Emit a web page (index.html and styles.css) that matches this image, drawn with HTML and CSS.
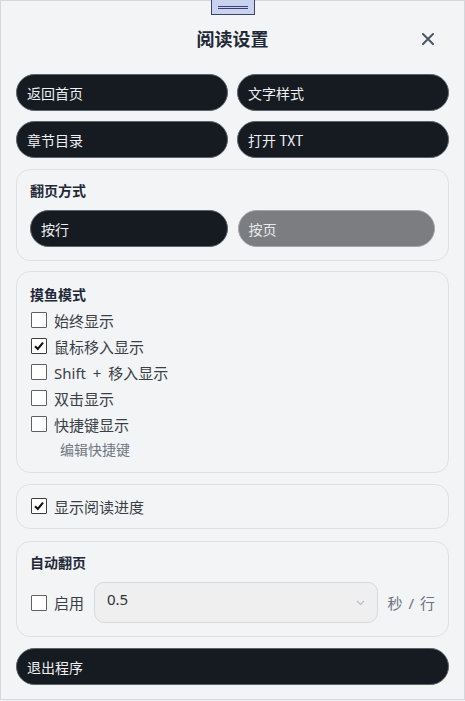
FILE: index.html
```html
<!DOCTYPE html>
<html lang="zh-CN">
<head>
    <meta charset="UTF-8">
    <meta name="viewport" content="width=device-width, initial-scale=1.0">
    <title>阅读设置</title>
    <link rel="stylesheet" href="styles.css">
</head>
<body>

<div class="panel">
    <div class="handle"><span></span><span></span></div>

    <header>
        <h1>阅读设置</h1>
        <button class="close" title="关闭">
            <svg width="12" height="12" viewBox="0 0 12 12"><path d="M1 1 L11 11 M11 1 L1 11" stroke="#4b5563" stroke-width="2" stroke-linecap="round"/></svg>
        </button>
    </header>

    <div class="actions">
        <button class="pill">返回首页</button>
        <button class="pill">文字样式</button>
        <button class="pill">章节目录</button>
        <button class="pill">打开 TXT</button>
    </div>

    <section class="card">
        <h2>翻页方式</h2>
        <div class="pair">
            <button class="pill">按行</button>
            <button class="pill muted">按页</button>
        </div>
    </section>

    <section class="card fish">
        <h2>摸鱼模式</h2>
        <label class="check"><span class="box"></span>始终显示</label>
        <label class="check"><span class="box on"><svg viewBox="0 0 16 16"><path d="M3.5 8.2 L6.6 11.4 L12.6 4.2" fill="none" stroke="#111" stroke-width="2.4"/></svg></span>鼠标移入显示</label>
        <label class="check"><span class="box"></span>Shift + 移入显示</label>
        <label class="check"><span class="box"></span>双击显示</label>
        <label class="check"><span class="box"></span>快捷键显示</label>
        <a class="edit-keys">编辑快捷键</a>
    </section>

    <section class="card single">
        <label class="check"><span class="box on"><svg viewBox="0 0 16 16"><path d="M3.5 8.2 L6.6 11.4 L12.6 4.2" fill="none" stroke="#111" stroke-width="2.4"/></svg></span>显示阅读进度</label>
    </section>

    <section class="card auto">
        <h2>自动翻页</h2>
        <div class="auto-row">
            <label class="check"><span class="box"></span>启用</label>
            <div class="select">
                <span>0.5</span>
                <svg width="9" height="6" viewBox="0 0 9 6"><path d="M1 1 L4.5 4.5 L8 1" fill="none" stroke="#b9bdc3" stroke-width="1.2"/></svg>
            </div>
            <span class="unit">秒 / 行</span>
        </div>
    </section>

    <button class="pill wide">退出程序</button>
</div>

</body>
</html>
```

FILE: styles.css
```css
* {
    margin: 0;
    padding: 0;
    box-sizing: border-box;
}

body {
    font-family: 'Noto Sans', 'Noto Sans CJK SC', sans-serif;
    background: #f3f4f6;
    color: #374151;
}

.panel {
    width: 465px;
    height: 700px;
    border: 1px solid #d3d7de;
    background: #f3f4f6;
    padding: 0 15px;
    display: flex;
    flex-direction: column;
}

.handle {
    width: 44px;
    height: 15px;
    margin: -1px auto 0;
    background: #c9d3ef;
    border: 1px solid #3b4170;
    border-top: none;
    display: flex;
    flex-direction: column;
    align-items: center;
    padding-top: 6px;
    gap: 1px;
}

.handle span {
    width: 30px;
    height: 1px;
    background: #3b4170;
}

header {
    height: 48px;
    display: flex;
    align-items: center;
    justify-content: center;
    position: relative;
}

header h1 {
    font-size: 18px;
    font-weight: 700;
    line-height: 24px;
    color: #1f2937;
}

.close {
    position: absolute;
    right: 15px;
    top: 18px;
    width: 12px;
    height: 12px;
    border: none;
    background: none;
    display: flex;
}

.actions {
    margin-top: 11px;
    display: grid;
    grid-template-columns: 1fr 1fr;
    column-gap: 9px;
    row-gap: 10px;
}

.pill {
    height: 37px;
    border-radius: 19px;
    border: 1.5px solid #5c626b;
    background: #161a21;
    color: #eef0f3;
    font-family: 'Noto Sans CJK SC', 'Noto Sans', sans-serif;
    font-size: 14px;
    text-align: left;
    padding-left: 10px;
    cursor: pointer;
}

.pill.muted {
    background: #7b7d80;
    border-color: #a2a6ab;
    color: #e8eaed;
}

.pill.wide {
    margin-top: 11px;
    width: 100%;
}

.card {
    margin-top: 11px;
    border: 1px solid #dde1e7;
    border-radius: 14px;
    padding: 11px 13px 13px;
}

.card h2 {
    font-family: 'Noto Sans CJK SC', sans-serif;
    font-size: 14px;
    font-weight: 700;
    line-height: 18px;
    color: #1f2937;
}

.pair {
    margin-top: 11px;
    display: grid;
    grid-template-columns: 1fr 1fr;
    gap: 10px;
}

.fish {
    margin-top: 10px;
    padding: 13px 13px 13px;
}

.fish h2 {
    margin-bottom: 4px;
}

.check {
    height: 26px;
    display: flex;
    align-items: center;
    gap: 7px;
    font-size: 15px;
    word-spacing: 3px;
    color: #3a3f47;
    padding-left: 1px;
}

.box {
    width: 16px;
    height: 16px;
    border: 1px solid #5e6166;
    border-radius: 1px;
    background: #fff;
    display: flex;
}

.box.on {
    border-color: #3d3f43;
}

.box svg {
    width: 14px;
    height: 14px;
}

.edit-keys {
    display: block;
    margin: 4px 0 0 30px;
    font-size: 14px;
    line-height: 18px;
    color: #707782;
}

.single {
    padding: 8px 13px 9px;
}

.auto {
    margin-top: 12px;
    padding: 11px 13px 13px;
}

.auto-row {
    margin-top: 11px;
    display: flex;
    align-items: center;
}

.auto-row .check {
    margin-right: 10px;
}

.select {
    flex: 1;
    height: 41px;
    border: 1px solid #d5dae1;
    border-radius: 10px;
    background: #efefef;
    display: flex;
    justify-content: space-between;
    align-items: center;
    padding: 0 12px;
    font-size: 15px;
    color: #2d3239;
}

.select span {
    margin-top: -8px;
}

.unit {
    margin-left: 10px;
    font-size: 15px;
    word-spacing: 2px;
    color: #6b7280;
}
```
